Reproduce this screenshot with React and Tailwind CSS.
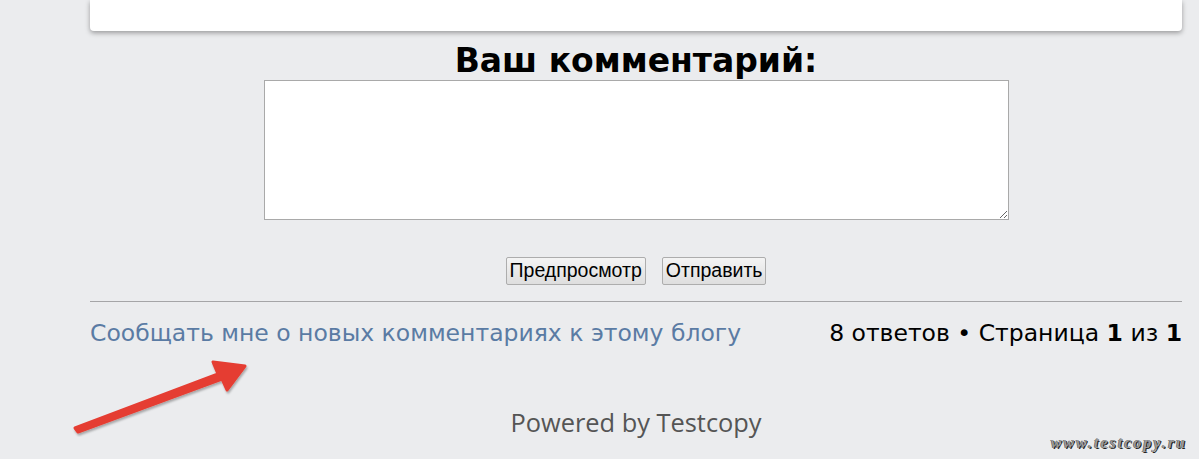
export default function App() {
	return (
		<div className="relative w-[1199px] h-[459px] overflow-hidden bg-[#ebecee]" style={{ fontFamily: "'DejaVu Sans', sans-serif" }}>
			<div className="ml-[90px] w-[1092px]">
				<div className="h-[31px] bg-white rounded-b-[4px] shadow-[0_2px_5px_rgba(0,0,0,0.35)]"></div>

				<h2 className="mt-[11px] text-center text-[33px] font-bold leading-[38px] text-black">Ваш комментарий:</h2>

				<div className="flex justify-center">
					<textarea
						className="block w-[745px] h-[140px] bg-white border border-[#a9a9a9] outline-none"
						defaultValue=""
					></textarea>
				</div>

				<div className="mt-[37px] flex justify-center gap-[16px]" style={{ fontFamily: "'Liberation Sans', Arial, sans-serif" }}>
					<button className="h-[28px] px-[3px] text-[19.5px] leading-none text-black bg-gradient-to-b from-[#f4f4f4] to-[#dedede] border border-[#adadad] rounded-[2px]">
						Предпросмотр
					</button>
					<button className="h-[28px] px-[3px] text-[19.5px] leading-none text-black bg-gradient-to-b from-[#f4f4f4] to-[#dedede] border border-[#adadad] rounded-[2px]">
						Отправить
					</button>
				</div>

				<div className="mt-[16px] h-px bg-[#a5a5a7]"></div>

				<div className="mt-[16px] flex items-center justify-between text-[23.5px] leading-[30px]">
					<a href="#" className="text-[#5a7ba4]">Сообщать мне о новых комментариях к этому блогу</a>
					<span className="text-black">
						8 ответов • Страница <b>1</b> из <b>1</b>
					</span>
				</div>

				<div className="mt-[59px] text-center text-[25.4px] leading-[30px] text-[#555]" style={{ fontFamily: "'Open Sans', sans-serif" }}>
					Powered by Testcopy
				</div>
			</div>

			<svg className="absolute left-[70px] top-[352px]" width="190" height="85" viewBox="0 0 190 85">
				<defs>
					<filter id="sh" x="-10%" y="-10%" width="130%" height="140%">
						<feDropShadow dx="1" dy="2" stdDeviation="1" floodColor="#000" floodOpacity="0.3" />
					</filter>
				</defs>
				<path
					d="M5 76 L148 22 L143 10 L175 14 L157 38 L152 27 L8 80 Z"
					fill="#e53d32"
					stroke="#e53d32"
					strokeWidth="3"
					strokeLinejoin="round"
					filter="url(#sh)"
				/>
			</svg>

			<div
				className="absolute right-[12px] top-[431px] text-[16px] font-bold italic tracking-[2px] text-[#999]"
				style={{ fontFamily: "'Liberation Serif', serif", textShadow: "1px 1px 0 #222, -0.5px -0.5px 0 #555" }}
			>
				www.testcopy.ru
			</div>
		</div>
	);
}
